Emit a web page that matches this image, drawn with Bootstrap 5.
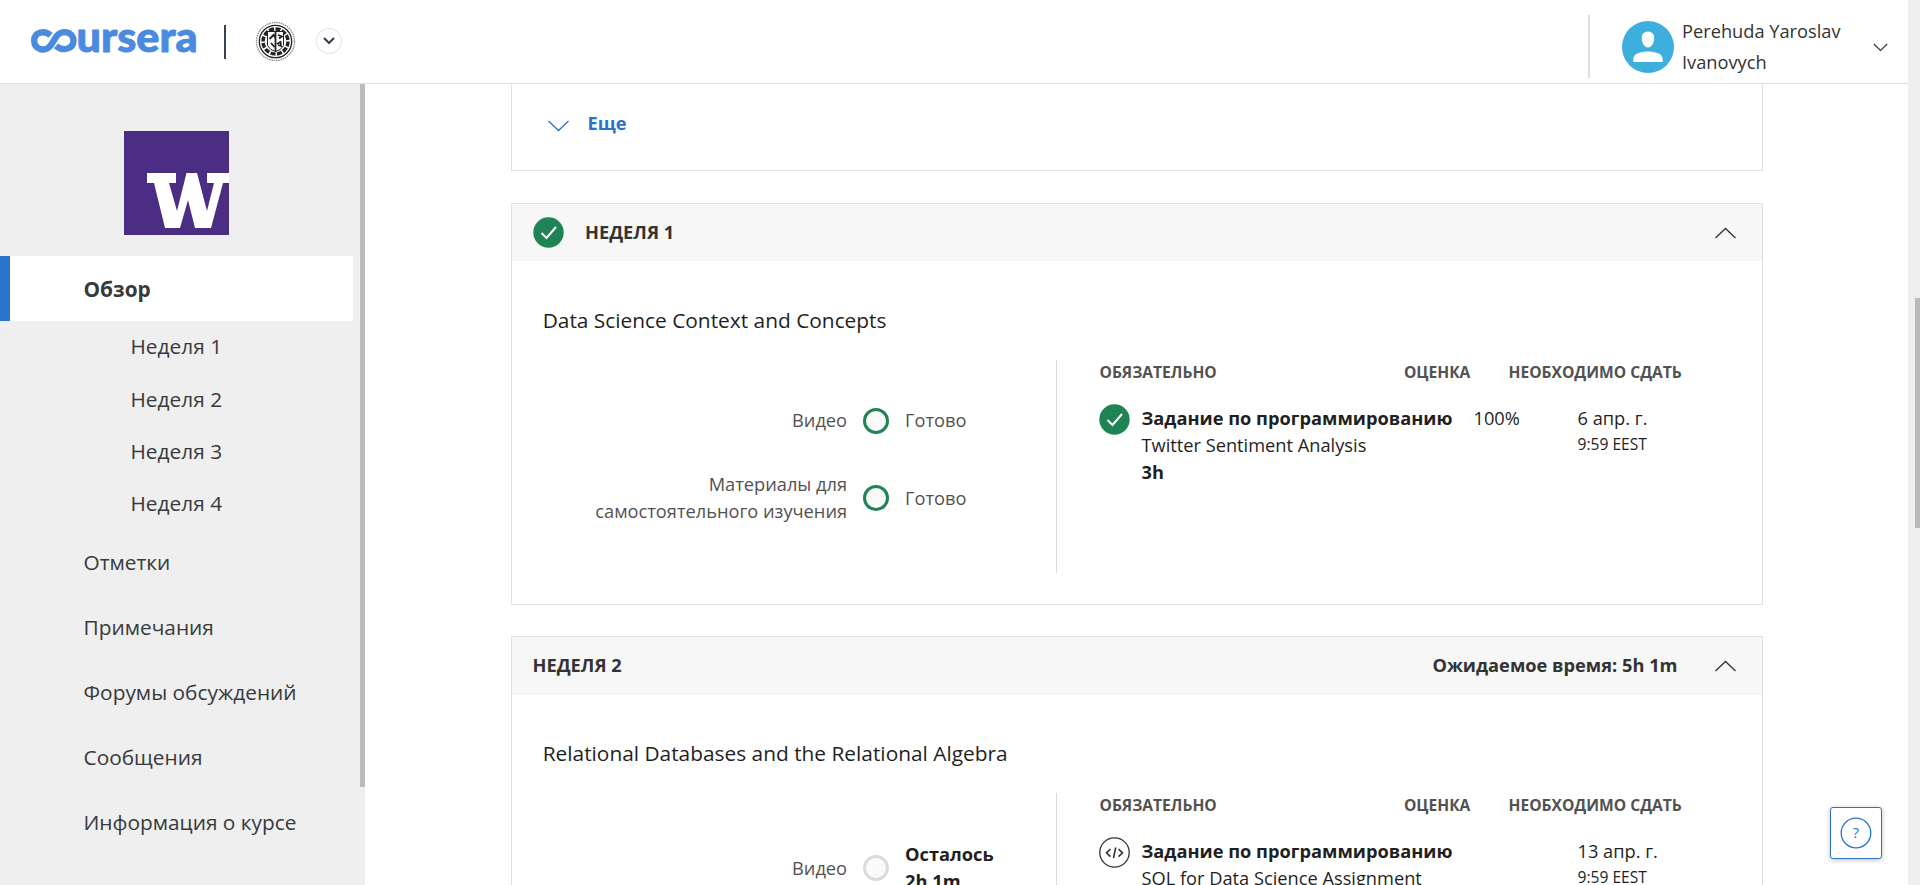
<!DOCTYPE html>
<html lang="ru">
<head>
<meta charset="utf-8">
<title>Coursera</title>
<link href="https://cdn.jsdelivr.net/npm/bootstrap@5.3.0/dist/css/bootstrap.min.css" rel="stylesheet">
<style>
body{font-family:"Open Sans",sans-serif;font-size:18.240px;line-height:27.3px;color:#1f1f1f;height:100vh;overflow:hidden;background:#fff}
.fs-nav{font-size:20.850px}
.topbar{height:84px;border-bottom:1px solid #e0e0e0}
.brand-logo{margin-left:31px;overflow:visible}
.bar-dark{width:2px;height:34px;background:#37424f;margin:0 29px 0 27px}
.seal{margin-top:-1px}
.round-btn{width:26px;height:26px;border:1px solid #e0e0e0;margin-left:20px;margin-top:-1px}
.userbox{height:63px;border-left:2px solid #dedede;padding-left:32px;margin-top:10px;color:#333}
.userbox .user-name{line-height:31px;width:170px;margin:0 21px 0 8px;padding-top:1px}
.userbox .caret{margin:2px 20px 0 0}
.side{width:365px;background:#efefef}
.side .logo-w{margin:47px 0 21px 124px;width:105px;height:104px}
.side .items{width:353px}
.side a{color:#373a3c;text-decoration:none;display:flex;align-items:center;height:65px;padding-left:83.500px}
.side a.current{background:#fff;border-left:10px solid #2a73cc;padding:2px 0 0 73.500px;font-weight:700}
.side .weeks a{height:52.200px;padding-left:130.500px}
.side-bar{width:5px;height:703px;background:#bbb}
.page-bar{width:12px;background:#f0efee;padding:298px 0 0 7px}
.page-bar div{height:230px;background:#bababa}
.wrap{width:1252px;margin:0 auto}
.week{border:1px solid #e1e1e1;margin-bottom:31.400px}
.intro{margin-bottom:32px}
.week-head{height:57.400px;background:#f7f7f7;padding:0 25px 0 21px;color:#333;font-weight:700}
.week-head .week-name{margin-left:21.500px}
.week-head .estimate{margin-right:36px}
.more{height:86px;padding:0 0 7px 35.500px;gap:17.500px;color:#2a73cc;font-weight:700}
.week-body{padding:43.600px 31px 31px 31.200px}
.week-title{font-size:20.860px;line-height:31px;margin-bottom:24px}
.left{width:514.800px;height:213px;border-right:1px solid #dcdcdc;color:#525252;padding-top:47.500px}
.left .lab{width:304.400px;text-align:right}
.left .line + .line{margin-top:36.300px}
.left b{color:#1f1f1f}
.ring{width:26px;height:26px;border:3px solid #1f8354;background:#fafafa;margin:0 16px;flex:none}
.ring.idle{border-color:#dcdcdc}
.right{padding-left:42px}
.heads{font-size:15.600px;line-height:24px;color:#525252;font-weight:700;margin-bottom:19.700px}
.c1{width:304.400px}.c2{width:104.600px}
.detail{padding-top:1px}
.task{width:332px;margin-left:11px}
.grade{width:104px}
.small-t{font-size:15.600px;line-height:24px}
.help{right:38px;bottom:26px;width:52px;height:52px;border:1px solid #2a73cc;border-radius:3px;background:#fff;box-shadow:0 1px 5px rgba(0,0,0,.25)}
</style>
</head>
<body class="d-flex">
<div class="flex-grow-1 d-flex flex-column">
<header class="topbar d-flex align-items-center flex-shrink-0">
<svg class="brand-logo" width="166" height="36" viewBox="0 -.3 166 36">
<path d="M19.500 11C14 6 3.200 7 3.200 16.300S14 28 19.500 21.500L25.500 12C30 5 42.500 7 42.500 16.300S31 27 25 21.500" fill="none" stroke="#4a8be0" stroke-width="6.400"/>
<text x="45.500" y="27.500" textLength="121" lengthAdjust="spacingAndGlyphs" font-family="Lato" font-weight="900" font-size="42" fill="#4a8be0" stroke="#4a8be0" stroke-width=".9">ursera</text></svg>
<div class="bar-dark"></div>
<svg class="seal" width="41" height="41" viewBox="0 0 41 41" fill="none" stroke="#222">
<circle cx="20.500" cy="20.500" r="19" stroke="#888" stroke-width="1.300" stroke-dasharray="1.500 .8"/><circle cx="20.500" cy="20.500" r="16.200" stroke-width="1.300"/><circle cx="20.500" cy="20.500" r="12.500" stroke-width="3.500" stroke-dasharray="5 1.500"/>
<path d="M12.500 10.500h16v14q-2.500 5-8 6q-5.500-1-8-6z" fill="#fff"/><path d="M20.500 10.500v20M14.500 18l4-4 2 3M23 14l4 1.500-3 2M16 22l3.500 4M22 23l3.500-2 .5 4-3-1" stroke-width="1.800"/></svg>
<div class="round-btn rounded-circle d-flex align-items-center justify-content-center"><svg width="12" height="8" viewBox="0 0 12 8"><path d="M1 1l5 5 5-5" fill="none" stroke="#37424f" stroke-width="2.200"/></svg></div>
<div class="userbox ms-auto d-flex align-items-center">
<svg width="52" height="52" viewBox="0 0 52 52"><circle cx="26" cy="26" r="26" fill="#3dafdc"/><path d="M26 10.500c4.300 0 6.500 3 6.200 7.300-.4 5-2.700 8.700-6.200 8.700s-5.800-3.700-6.200-8.700c-.3-4.300 1.900-7.300 6.200-7.300zM11.200 41c0-5 .8-7.300 4.800-8.700 6.500-2.300 13.500-2.300 20 0 4 1.400 4.800 3.700 4.800 8.700z" fill="#fff"/></svg>
<div class="user-name">Perehuda Yaroslav Ivanovych</div>
<svg class="caret" width="15" height="9" viewBox="0 0 15 9"><path d="M.8 1l6.700 6.500L14.200 1" fill="none" stroke="#333" stroke-width="1.100"/></svg>
</div>
</header>
<div class="flex-grow-1 d-flex overflow-hidden">
<aside class="side fs-nav d-flex justify-content-between flex-shrink-0">
<nav class="items">
<svg class="logo-w d-block" viewBox="0 0 105 104"><path fill="#4b2e83" d="M0 0h105v104H0z"/><path fill="#fff" d="M23 42h29v10h-7l8 28 9.500-38h10.500l10 38 7-28h-7V42h22v10h-6L87 97H71l-7-28-8 28H41L30 52h-7z"/></svg>
<a class="current" href="#">Обзор</a>
<div class="weeks"><a href="#">Неделя 1</a><a href="#">Неделя 2</a><a href="#">Неделя 3</a><a href="#">Неделя 4</a></div>
<a href="#">Отметки</a><a href="#">Примечания</a><a href="#">Форумы обсуждений</a><a href="#">Сообщения</a><a href="#">Информация о курсе</a>
</nav>
<div class="side-bar"></div>
</aside>
<main class="flex-grow-1 overflow-hidden">
<div class="wrap">
<section class="week intro border-top-0"><div class="more d-flex align-items-center">
<svg class="mt-1" width="23" height="12" viewBox="0 0 23 12"><path d="M1.500 1L11.500 10.500 21.500 1" fill="none" stroke="#2a73cc" stroke-width="1.300"/></svg>Еще</div></section>

<section class="week">
<div class="week-head d-flex align-items-center">
<svg width="31" height="31" viewBox="0 0 31 31"><circle cx="15.500" cy="15.500" r="15.200" fill="#1f8354"/><path d="M8.500 16l5 5 9.500-11" fill="none" stroke="#fff" stroke-width="2"/></svg>
<span class="week-name">НЕДЕЛЯ 1</span>
<svg class="ms-auto" width="23" height="12" viewBox="0 0 23 12"><path d="M1.500 11L11.500 1.500 21.500 11" fill="none" stroke="#333" stroke-width="1.300"/></svg></div>
<div class="week-body">
<div class="week-title">Data Science Context and Concepts</div>
<div class="d-flex">
<div class="left">
<div class="line d-flex align-items-center"><div class="lab">Видео</div><div class="ring rounded-circle"></div><div>Готово</div></div>
<div class="line d-flex align-items-center"><div class="lab">Материалы для самостоятельного изучения</div><div class="ring rounded-circle"></div><div>Готово</div></div>
</div>
<div class="right">
<div class="heads d-flex"><div class="c1">ОБЯЗАТЕЛЬНО</div><div class="c2">ОЦЕНКА</div><div>НЕОБХОДИМО СДАТЬ</div></div>
<div class="d-flex">
<svg width="31" height="31" viewBox="0 0 31 31"><circle cx="15.500" cy="15.500" r="15.200" fill="#1f8354"/><path d="M8.500 16l5 5 9.500-11" fill="none" stroke="#fff" stroke-width="2"/></svg>
<div class="task detail"><b>Задание по программированию</b><br>Twitter Sentiment Analysis<br><b>3h</b></div>
<div class="grade detail">100%</div>
<div class="detail">6 апр. г.<div class="small-t">9:59 EEST</div></div>
</div>
</div></div></div></section>

<section class="week">
<div class="week-head d-flex align-items-center">
<span>НЕДЕЛЯ 2</span>
<span class="estimate ms-auto">Ожидаемое время: 5h 1m</span>
<svg width="23" height="12" viewBox="0 0 23 12"><path d="M1.500 11L11.500 1.500 21.500 11" fill="none" stroke="#333" stroke-width="1.300"/></svg></div>
<div class="week-body">
<div class="week-title">Relational Databases and the Relational Algebra</div>
<div class="d-flex">
<div class="left">
<div class="line d-flex align-items-center"><div class="lab">Видео</div><div class="ring idle rounded-circle"></div><b>Осталось<br>2h 1m</b></div>
</div>
<div class="right">
<div class="heads d-flex"><div class="c1">ОБЯЗАТЕЛЬНО</div><div class="c2">ОЦЕНКА</div><div>НЕОБХОДИМО СДАТЬ</div></div>
<div class="d-flex">
<svg width="31" height="31" viewBox="0 0 31 31" fill="none" stroke="#333"><circle cx="15.500" cy="15.500" r="14.700" stroke-width="1.300"/><path d="M11.500 12l-4 3.800 4 3.800M19.500 12l4 3.800-4 3.800M16.700 10.500l-2.200 10.500" stroke-width="1.600"/></svg>
<div class="task detail"><b>Задание по программированию</b><br>SQL for Data Science Assignment</div>
<div class="grade"></div>
<div class="detail">13 апр. г.<div class="small-t">9:59 EEST</div></div>
</div></div></div></div></section>
</div></main></div></div>
<div class="page-bar"><div></div></div>
<div class="help position-absolute d-flex align-items-center justify-content-center"><svg width="32" height="32" viewBox="0 0 32 32"><circle cx="16" cy="16" r="14.800" fill="none" stroke="#2a73cc" stroke-width="1.300"/><text x="16" y="21" text-anchor="middle" font-size="14.500" fill="#2a73cc" font-family="Open Sans">?</text></svg></div>
<script src="https://cdn.jsdelivr.net/npm/bootstrap@5.3.0/dist/js/bootstrap.bundle.min.js"></script>
</body>
</html>
